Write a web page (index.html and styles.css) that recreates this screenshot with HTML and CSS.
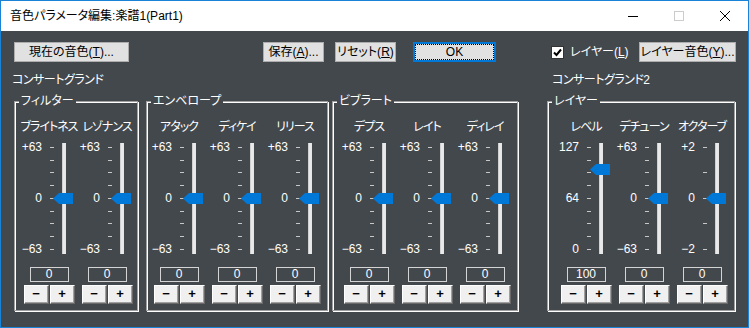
FILE: index.html
```html
<!DOCTYPE html>
<html lang="ja">
<head>
    <meta charset="UTF-8">
    <title>音色パラメータ編集</title>
    <link rel="stylesheet" href="styles.css">
</head>
<body>
    <div class="window">
        <div class="titlebar">
            <span class="title">音色パラメータ編集:楽譜1(Part1)</span>
            <div class="caption">
                <span><svg width="10" height="10" viewBox="0 0 10 10"><path d="M0 5.5h10" stroke="#000" stroke-width="1"/></svg></span>
                <span><svg width="10" height="10" viewBox="0 0 10 10"><rect x="0.5" y="0.5" width="9" height="9" fill="none" stroke="#ccc"/></svg></span>
                <span><svg width="10" height="10" viewBox="0 0 10 10"><path d="M0 0L10 10M10 0L0 10" stroke="#000" stroke-width="1"/></svg></span>
            </div>
        </div>

        <div class="content">
            <div class="toolbar">
                <button class="btn btn-current">現在の音色(<u>T</u>)...</button>
                <button class="btn btn-save">保存(<u>A</u>)...</button>
                <button class="btn btn-reset">リセット(<u>R</u>)</button>
                <button class="btn btn-ok">OK</button>
                <label class="layer-check">
                    <span class="check"><svg width="11" height="11" viewBox="0 0 11 11"><path d="M2 5.5L4.5 8L9 2.5" fill="none" stroke="#000" stroke-width="2"/></svg></span>
                    <span>レイヤー(<u>L</u>)</span>
                </label>
                <button class="btn btn-layer">レイヤー音色(<u>Y</u>)...</button>
            </div>

            <div class="names">
                <span class="name-main">コンサートグランド</span>
                <span>コンサートグランド2</span>
            </div>

            <div class="groups">
                <!-- フィルター -->
                <fieldset class="group g-filter">
                    <legend>フィルター</legend>
                    <div class="cols">
                        <div class="col">
                            <div class="col-title">ブライトネス</div>
                            <div class="slider">
                                <div class="scale"><span>+63</span><span></span><span></span><span></span><span>0</span><span></span><span></span><span></span><span>−63</span></div>
                                <div class="track"><svg class="thumb" style="top:50px" viewBox="0 0 20 11"><polygon points="0,5.5 6,0 20,0 20,11 6,11"/></svg></div>
                            </div>
                            <div class="value">0</div>
                            <div class="steps"><button class="minus">−</button><button>+</button></div>
                        </div>
                        <div class="col">
                            <div class="col-title">レゾナンス</div>
                            <div class="slider">
                                <div class="scale"><span>+63</span><span></span><span></span><span></span><span>0</span><span></span><span></span><span></span><span>−63</span></div>
                                <div class="track"><svg class="thumb" style="top:50px" viewBox="0 0 20 11"><polygon points="0,5.5 6,0 20,0 20,11 6,11"/></svg></div>
                            </div>
                            <div class="value">0</div>
                            <div class="steps"><button class="minus">−</button><button>+</button></div>
                        </div>
                    </div>
                </fieldset>

                <!-- エンベロープ -->
                <fieldset class="group g-env">
                    <legend>エンベロープ</legend>
                    <div class="cols">
                        <div class="col">
                            <div class="col-title">アタック</div>
                            <div class="slider">
                                <div class="scale"><span>+63</span><span></span><span></span><span></span><span>0</span><span></span><span></span><span></span><span>−63</span></div>
                                <div class="track"><svg class="thumb" style="top:50px" viewBox="0 0 20 11"><polygon points="0,5.5 6,0 20,0 20,11 6,11"/></svg></div>
                            </div>
                            <div class="value">0</div>
                            <div class="steps"><button class="minus">−</button><button>+</button></div>
                        </div>
                        <div class="col">
                            <div class="col-title">ディケイ</div>
                            <div class="slider">
                                <div class="scale"><span>+63</span><span></span><span></span><span></span><span>0</span><span></span><span></span><span></span><span>−63</span></div>
                                <div class="track"><svg class="thumb" style="top:50px" viewBox="0 0 20 11"><polygon points="0,5.5 6,0 20,0 20,11 6,11"/></svg></div>
                            </div>
                            <div class="value">0</div>
                            <div class="steps"><button class="minus">−</button><button>+</button></div>
                        </div>
                        <div class="col">
                            <div class="col-title">リリース</div>
                            <div class="slider">
                                <div class="scale"><span>+63</span><span></span><span></span><span></span><span>0</span><span></span><span></span><span></span><span>−63</span></div>
                                <div class="track"><svg class="thumb" style="top:50px" viewBox="0 0 20 11"><polygon points="0,5.5 6,0 20,0 20,11 6,11"/></svg></div>
                            </div>
                            <div class="value">0</div>
                            <div class="steps"><button class="minus">−</button><button>+</button></div>
                        </div>
                    </div>
                </fieldset>

                <!-- ビブラート -->
                <fieldset class="group g-vib">
                    <legend>ビブラート</legend>
                    <div class="cols">
                        <div class="col">
                            <div class="col-title">デプス</div>
                            <div class="slider">
                                <div class="scale"><span>+63</span><span></span><span></span><span></span><span>0</span><span></span><span></span><span></span><span>−63</span></div>
                                <div class="track"><svg class="thumb" style="top:50px" viewBox="0 0 20 11"><polygon points="0,5.5 6,0 20,0 20,11 6,11"/></svg></div>
                            </div>
                            <div class="value">0</div>
                            <div class="steps"><button class="minus">−</button><button>+</button></div>
                        </div>
                        <div class="col">
                            <div class="col-title">レイト</div>
                            <div class="slider">
                                <div class="scale"><span>+63</span><span></span><span></span><span></span><span>0</span><span></span><span></span><span></span><span>−63</span></div>
                                <div class="track"><svg class="thumb" style="top:50px" viewBox="0 0 20 11"><polygon points="0,5.5 6,0 20,0 20,11 6,11"/></svg></div>
                            </div>
                            <div class="value">0</div>
                            <div class="steps"><button class="minus">−</button><button>+</button></div>
                        </div>
                        <div class="col">
                            <div class="col-title">ディレイ</div>
                            <div class="slider">
                                <div class="scale"><span>+63</span><span></span><span></span><span></span><span>0</span><span></span><span></span><span></span><span>−63</span></div>
                                <div class="track"><svg class="thumb" style="top:50px" viewBox="0 0 20 11"><polygon points="0,5.5 6,0 20,0 20,11 6,11"/></svg></div>
                            </div>
                            <div class="value">0</div>
                            <div class="steps"><button class="minus">−</button><button>+</button></div>
                        </div>
                    </div>
                </fieldset>

                <!-- レイヤー -->
                <fieldset class="group g-layer">
                    <legend>レイヤー</legend>
                    <div class="cols">
                        <div class="col">
                            <div class="col-title">レベル</div>
                            <div class="slider">
                                <div class="scale"><span>127</span><span></span><span></span><span></span><span>64</span><span></span><span></span><span></span><span>0</span></div>
                                <div class="track"><svg class="thumb" style="top:20.7px" viewBox="0 0 20 11"><polygon points="0,5.5 6,0 20,0 20,11 6,11"/></svg></div>
                            </div>
                            <div class="value">100</div>
                            <div class="steps"><button class="minus">−</button><button>+</button></div>
                        </div>
                        <div class="col">
                            <div class="col-title">デチューン</div>
                            <div class="slider">
                                <div class="scale"><span>+63</span><span></span><span></span><span></span><span>0</span><span></span><span></span><span></span><span>−63</span></div>
                                <div class="track"><svg class="thumb" style="top:50px" viewBox="0 0 20 11"><polygon points="0,5.5 6,0 20,0 20,11 6,11"/></svg></div>
                            </div>
                            <div class="value">0</div>
                            <div class="steps"><button class="minus">−</button><button>+</button></div>
                        </div>
                        <div class="col">
                            <div class="col-title">オクターブ</div>
                            <div class="slider">
                                <div class="scale"><span>+2</span><span class="none"></span><span></span><span class="none"></span><span>0</span><span class="none"></span><span></span><span class="none"></span><span>−2</span></div>
                                <div class="track"><svg class="thumb" style="top:50px" viewBox="0 0 20 11"><polygon points="0,5.5 6,0 20,0 20,11 6,11"/></svg></div>
                            </div>
                            <div class="value">0</div>
                            <div class="steps"><button class="minus">−</button><button>+</button></div>
                        </div>
                    </div>
                </fieldset>
            </div>
        </div>
    </div>
</body>
</html>
```

FILE: styles.css
```css
* {
    margin: 0;
    padding: 0;
    box-sizing: border-box;
}

body {
    font-family: "Liberation Sans", "Noto Sans CJK JP", sans-serif;
    font-size: 12px;
    line-height: 14px;
    font-feature-settings: "palt";
    background: #fff;
}

.window {
    width: 749px;
    height: 328px;
    border: 1px solid #1883d7;
    background: #43484d;
    display: flex;
    flex-direction: column;
    overflow: hidden;
}

/* title bar */
.titlebar {
    height: 30px;
    background: #fff;
    display: flex;
    align-items: center;
}

.title {
    flex: 1;
    padding-left: 9px;
    color: #000;
}

.caption {
    display: flex;
    height: 100%;
}

.caption span {
    width: 46px;
    display: flex;
    align-items: center;
    justify-content: center;
}

/* content */
.content {
    flex: 1;
    padding-top: 11px;
    color: #fff;
}

.toolbar {
    display: flex;
    align-items: center;
    height: 20px;
    padding: 0 12px 0 13px;
}

.btn {
    height: 20px;
    background: #e1e1e1;
    border: 1px solid #adadad;
    color: #000;
    font: inherit;
    line-height: 16px;
    text-align: center;
    white-space: nowrap;
}

.btn-current { width: 115px; }
.btn-save { width: 61px; margin-left: 134px; }
.btn-reset { width: 61px; margin-left: 11px; }

.btn-ok {
    width: 83px;
    margin-left: 17px;
    border: 2px solid #0078d7;
    outline: 1px dotted #000;
    outline-offset: -3px;
}

.layer-check {
    display: flex;
    align-items: center;
    gap: 6px;
    margin-left: 55px;
    white-space: nowrap;
}

.check {
    width: 13px;
    height: 13px;
    background: #fff;
    border: 1px solid #333;
    display: flex;
    align-items: center;
    justify-content: center;
}

.btn-layer {
    width: 97px;
    margin-left: auto;
}

.names {
    display: flex;
    margin-top: 11px;
    padding-left: 11px;
    letter-spacing: -0.5px;
}

.name-main {
    width: 540px;
}

/* groups */
.groups {
    display: flex;
    align-items: flex-start;
    margin-top: 7px;
    padding-left: 13px;
}

.group {
    border: 1px solid #a0a0a0;
    box-shadow: inset 1px 1px 0 #fff, 1px 1px 0 #fff;
    min-width: 0;
}

.group legend {
    margin-left: 4px;
    padding: 0 2px;
    background: #43484d;
    line-height: 14px;
}

.g-filter { width: 124px; }
.g-env { width: 182px; margin-left: 8px; }
.g-vib { width: 186px; margin-left: 4px; }
.g-layer { width: 188px; margin-left: 29px; }

.cols {
    display: flex;
    padding: 12px 0 6px;
}

.g-filter .cols { padding-left: 5px; }
.g-env .cols { padding-left: 3px; }
.g-vib .cols { padding-left: 7px; }
.g-layer .cols { padding-left: 9px; }

.col {
    width: 58px;
    flex: none;
    display: flex;
    flex-direction: column;
}

.col-title {
    text-align: center;
    white-space: nowrap;
    letter-spacing: -1px;
    margin-bottom: 7px;
}

.slider {
    display: flex;
    height: 114.75px;
}

.scale {
    width: 34px;
    display: grid;
    grid-template-rows: repeat(9, 12.75px);
}

.scale span {
    display: flex;
    align-items: center;
    justify-content: flex-end;
    white-space: nowrap;
    line-height: 12px;
}

.scale span::after {
    content: "";
    width: 4px;
    height: 1px;
    margin-left: 8px;
    background: #c8c8c8;
}

.scale span.none::after {
    background: transparent;
}

.track {
    position: relative;
    width: 4px;
    height: 111px;
    margin-left: 8px;
    align-self: center;
    background: linear-gradient(to right, #c4c4c4, #ececec 40%, #e4e4e4);
}

.thumb {
    position: absolute;
    left: -9px;
    width: 20px;
    height: 11px;
    fill: #0078d7;
}

.value {
    width: 39px;
    height: 15px;
    margin: 11px auto 0;
    border: 1px solid #d4d4d4;
    text-align: center;
    line-height: 13px;
}

.steps {
    display: flex;
    justify-content: center;
    gap: 1px;
    margin-top: 3px;
}

.steps button {
    width: 25px;
    height: 19px;
    background: #f0f0f0;
    border: 1px solid;
    border-color: #fff #696969 #696969 #fff;
    box-shadow: inset -1px -1px 0 #a0a0a0;
    font: inherit;
    font-size: 13px;
    font-weight: bold;
    color: #000;
    line-height: 16px;
}
```
